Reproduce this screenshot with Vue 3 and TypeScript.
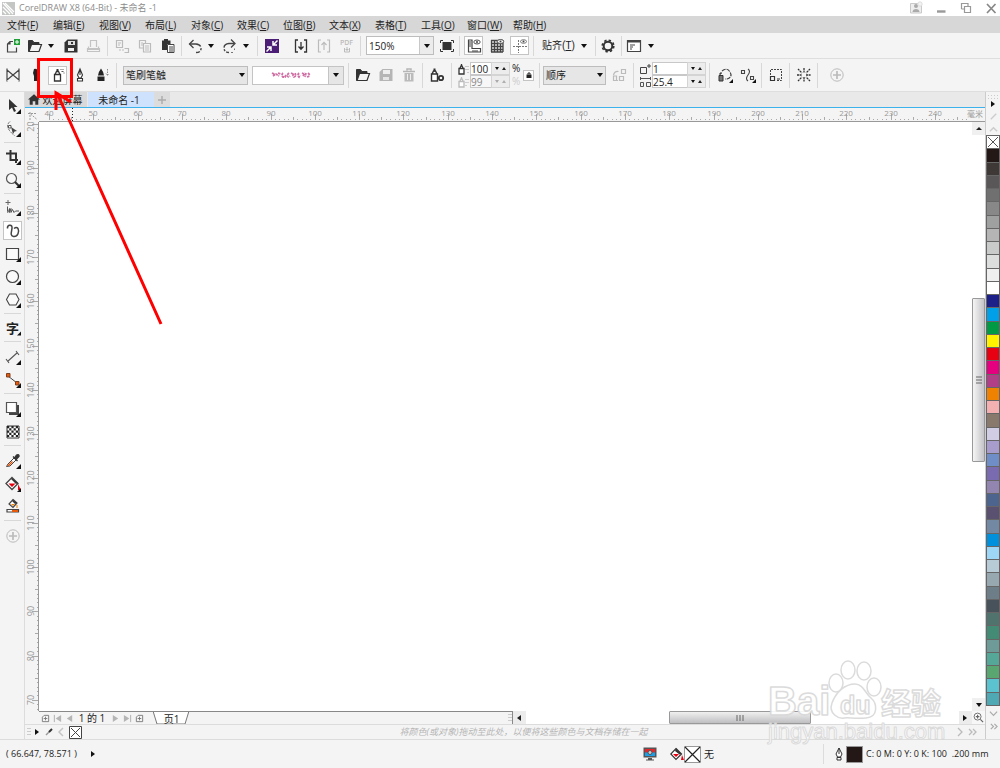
<script setup lang="ts">
import { ref } from 'vue'

interface Tick { pos: number; size: number }
interface Mark { pos: number; label: string }

const MM = 4.43

const menus: [string, string][] = [
  ['文件', 'F'], ['编辑', 'E'], ['视图', 'V'], ['布局', 'L'], ['对象', 'C'], ['效果', 'C'],
  ['位图', 'B'], ['文本', 'X'], ['表格', 'T'], ['工具', 'O'], ['窗口', 'W'], ['帮助', 'H'],
]

const swatches: string[] = [
  '#231815', '#3e3836', '#595757', '#717071', '#888888', '#9fa0a0', '#b5b5b6', '#c9caca', '#dcdddd',
  '#efefef', '#ffffff', '#1d2088', '#00a0e9', '#009944', '#fff100', '#e60012', '#e4007f', '#b03f87',
  '#ef8200', '#f4b0b1', '#89786c', '#d0cde4', '#a79ccc', '#6f8ec8', '#7a6ab0', '#9285b0', '#4d648f',
  '#5a5070', '#7388a3', '#0090dc', '#9dd7f5', '#b7cbd7', '#98a8b0', '#6e7e88', '#48525a', '#50746d',
  '#438b75', '#6e9a98', '#55a898', '#5aa671', '#5bc2d0', '#4fa9b5',
]

function ticks(origin: number, count: number): Tick[] {
  return Array.from({ length: count }, (_, i) => ({
    pos: Math.round(origin + i * MM),
    size: i % 10 === 0 ? 6 : i % 5 === 0 ? 3 : 1,
  }))
}
function marks(origin: number, start: number, step: number, count: number): Mark[] {
  return Array.from({ length: count }, (_, i) => ({
    pos: Math.round(origin + i * 10 * MM),
    label: String(start + i * step),
  }))
}

const hTicks = ticks(10, 420)
const hMarks = marks(10, 40, 10, 21)
const vTicks = ticks(2, 134)
const vMarks = marks(2, 200, -10, 14)

const zoomLevel = ref('150%')
const brushKind = ref('笔刷笔触')
const order = ref('顺序')
const sprayW = ref('100')
const sprayH = ref('99')
const dabs = ref('1')
const spacing = ref('25.4')
</script>

<template>
  <div class="app">
    <header class="title">
      <svg class="logo" viewBox="0 0 13 13"><rect width="13" height="13" fill="#c4c6c4" /><path d="M1 1L11 12M3 1l9 9M1 5l7 7M1 9l3 3" stroke="#fff" stroke-width="1.2" /></svg>
      <h1>CorelDRAW X8 (64-Bit) - 未命名 -1</h1>
      <div class="win">
        <button aria-label="账户"><svg viewBox="0 0 14 14"><path d="M1.500 2.500h11v9.500h-11z" fill="#eee" stroke="#c9c9c9" /><circle cx="7" cy="5" r="2" fill="#aaa" /><path d="M3.500 11c0-4 7-4 7 0z" fill="#aaa" /><circle cx="11" cy="3" r="2.200" fill="#f3f3f3" stroke="#ddd" /></svg></button>
        <button aria-label="最小化"><svg viewBox="0 0 14 14"><path d="M3 10.500h8.500" stroke="#999" stroke-width="2.400" /></svg></button>
        <button aria-label="还原"><svg viewBox="0 0 14 14"><path d="M2.500 8V2.500h6.500V5M5.500 5.500h6v6h-6zM2.500 8H5" fill="none" stroke="#999" stroke-width="1.200" /></svg></button>
        <button aria-label="关闭"><svg viewBox="0 0 14 14"><path d="M3 3l8.500 9M11.500 3L3 12" stroke="#888" stroke-width="1.700" /></svg></button>
      </div>
    </header>

    <nav class="menu">
      <button v-for="m in menus" :key="m[0]">{{ m[0] }}(<u>{{ m[1] }}</u>)</button>
    </nav>

    <div class="bar std">
      <button class="tb" aria-label="新建"><svg viewBox="0 0 16 16"><path d="M8 3.500H5L2.500 6v8h9V9.500M5 3.500V6H2.500" fill="none" stroke="#444" stroke-width="1.200" /><rect x="9" y="1" width="6" height="6" fill="#21a03a" /><path d="M12 2v4M10 4h4" stroke="#fff" /></svg></button>
      <div class="split">
        <button aria-label="打开"><svg viewBox="0 0 16 16"><path d="M1.500 13.500v-11h4l1.500 2h5V6" fill="#333" stroke="#333" /><path d="M2 13.500L4.500 6.500h10l-2.500 7z" fill="#f4f4f4" stroke="#333" stroke-width="1.200" /></svg></button>
        <button class="dd" aria-label="最近文件"><i /></button>
      </div>
      <button class="tb" aria-label="保存"><svg viewBox="0 0 16 16"><path d="M4.500 1.500h10v13h-13v-10z" fill="#333" /><rect x="5" y="3" width="7" height="4" fill="#ddd" /><rect x="5" y="10" width="6" height="3" fill="#eee" /><rect x="8" y="4" width="2" height="2" fill="#333" /></svg></button>
      <button class="tb" aria-label="打印"><svg viewBox="0 0 16 16"><path d="M4.500 9V2.500h6V9M2.500 8.500v3h10v-3M1.500 10.500v3h12v-3z" fill="none" stroke="#c3c3c3" stroke-width="1.200" /></svg></button>
      <span class="sep" />
      <button class="tb" aria-label="剪切"><svg viewBox="0 0 16 16"><path d="M2.500 2.500h6v7h-6zM4 5h3M4 7h2M10.500 10.500h4v4h-4M5 12h2m1 0h2" fill="none" stroke="#bbb" stroke-width="1.200" /></svg></button>
      <button class="tb" aria-label="复制"><svg viewBox="0 0 16 16"><path d="M6 10H2.500V2.500h6V5M4 5h2M4 7h2M6.500 5.500h7v8.500h-7zM8 8h4M8 10h4M8 12h4" fill="none" stroke="#bbb" stroke-width="1.200" /></svg></button>
      <button class="tb" aria-label="粘贴"><svg viewBox="0 0 16 16"><path d="M2 2.500h2V1h4v1.500h2.500V6H7v6H2z" fill="#333" /><path d="M7.500 6.500h6.500v8H7.500zM9 9h4M9 11h4M9 13h4" fill="#fff" stroke="#444" /></svg></button>
      <span class="sep" />
      <div class="split">
        <button aria-label="撤销"><svg viewBox="0 0 16 16"><path d="M2.500 6h6.500q5 .5 5 4.500t-5 4" fill="none" stroke="#444" stroke-width="1.400" stroke-dasharray="12 1.500 2 1.500" /><path d="M6.500 2L2.500 6l4 4" fill="none" stroke="#444" stroke-width="1.300" /></svg></button>
        <button class="dd" aria-label="撤销列表"><i /></button>
      </div>
      <div class="split">
        <button aria-label="重做"><svg viewBox="0 0 16 16"><path d="M12 5.500H7Q2 6 2 10t5 4.500" fill="none" stroke="#444" stroke-width="1.400" stroke-dasharray="12 1.500 2 1.500" /><path d="M9 1.500l4 4-4 4" fill="none" stroke="#444" stroke-width="1.300" /><path d="M9 14.500h2M12.500 12v-1.500" stroke="#777" /></svg></button>
        <button class="dd" aria-label="重做列表"><i /></button>
      </div>
      <span class="sep wide" />
      <button class="tb purple" aria-label="搜索内容"><svg viewBox="0 0 16 16"><rect x="1" y="1" width="14" height="14" fill="#4b1d75" /><path d="M13.500 2.500L9.500 6.500M9 3v4h4M2.500 13.500l4-4M3 9h4v4" fill="none" stroke="#fff" stroke-width="1.500" /></svg></button>
      <span class="sep wide blank" />
      <button class="tb" aria-label="导入"><svg viewBox="0 0 16 16"><path d="M5 2H2.500v12H5M11 2h2.500v12H11M8 4v7M5.500 8.500L8 11.200l2.500-2.700" fill="none" stroke="#333" stroke-width="1.300" /></svg></button>
      <button class="tb" aria-label="导出"><svg viewBox="0 0 16 16"><path d="M5 2H2.500v12H5M11 2h2.500v12H11M8 12V4.500M5.500 7L8 4.300 10.500 7" fill="none" stroke="#bbb" stroke-width="1.200" /></svg></button>
      <button class="tb pdf" aria-label="发布为 PDF">PDF<svg viewBox="0 0 8 6"><path d="M1.500 1v4h5V1M4 0v4M2.500 2.500h3" fill="none" stroke="#bbb" /></svg></button>
      <span class="sep" />
      <label class="combo zoom"><input v-model="zoomLevel" aria-label="缩放级别"><button class="dd" aria-label="缩放列表"><i /></button></label>
      <button class="tb narrow" aria-label="全屏预览"><svg viewBox="0 0 16 16"><rect x="3.500" y="4" width="9" height="8" fill="#333" /><path d="M1.500 5V2.500H4M12 2.500h2.500V5M14.500 11v2.500H12M4 13.500H1.500V11" fill="none" stroke="#333" /></svg></button>
      <span class="sep" />
      <button class="tb on" aria-label="显示标尺"><svg viewBox="0 0 16 16"><path d="M2.500 2v12h12v-3.500H6V2z" fill="#fff" stroke="#444" stroke-width="1.200" /><path d="M3 4h2M3 6h2M3 8h2M7 12v2M9 12v2M11 12v2" stroke="#444" /><ellipse cx="11" cy="4" rx="3.200" ry="2" fill="#fff" stroke="#555" /><circle cx="11" cy="4" r="1" fill="#444" /></svg></button>
      <button class="tb" aria-label="显示网格"><svg viewBox="0 0 16 16"><path d="M2 2.500h12M2 5.500h12M2 8.500h12M2 11.500h12M2 14h12M2.500 2v12M5.500 2v12M8.500 2v12M11.500 2v12M14 2v12" stroke="#444" stroke-width="1.300" /><ellipse cx="11.500" cy="3.500" rx="3.200" ry="2" fill="#fff" stroke="#555" /><circle cx="11.500" cy="3.500" r="1" fill="#444" /></svg></button>
      <button class="tb on" aria-label="显示辅助线"><svg viewBox="0 0 16 16"><path d="M6.500 2v13M1 8.500h14" stroke="#777" stroke-dasharray="2 1" /><ellipse cx="11.500" cy="3.500" rx="3" ry="1.800" fill="#fff" stroke="#777" /><circle cx="11.500" cy="3.500" r="1" fill="#444" /></svg></button>
      <span class="sep" />
      <button class="snap"><span>贴齐(<u>T</u>)</span><i /></button>
      <span class="sep" />
      <button class="tb narrow" aria-label="选项"><svg viewBox="0 0 16 16"><circle cx="8" cy="8" r="4.300" fill="none" stroke="#333" stroke-width="2" /><circle cx="8" cy="8" r="5.800" fill="none" stroke="#333" stroke-width="1.600" stroke-dasharray="2.400 2.150" /></svg></button>
      <span class="sep" />
      <div class="split">
        <button aria-label="应用程序启动器"><svg viewBox="0 0 16 16"><path d="M1.500 2.500h13v11h-13z" fill="#fff" stroke="#444" stroke-width="1.200" /><path d="M2 3.500h12" stroke="#444" stroke-width="2" /><path d="M4 7h5M4 9h3M4 11h2" stroke="#444" /></svg></button>
        <button class="dd" aria-label="启动列表"><i /></button>
      </div>
    </div>

    <div class="bar props">
      <button class="tb" aria-label="预设"><svg viewBox="0 0 16 16"><path d="M2 3l6 5-6 5zM14 3L8 8l6 5zM2 1.500v2M2 12.500v2M14 1.500v2M14 12.500v2" fill="none" stroke="#444" stroke-width="1.200" /></svg></button>
      <button class="tb" aria-label="笔刷"><svg viewBox="0 0 16 16"><path d="M6 2q3-1 4 2l-1 4v6H6V9L5 6z" fill="#222" /></svg></button>
      <button class="tb on spray" aria-label="喷涂" aria-pressed="true"><svg viewBox="0 0 16 16"><path d="M4.500 7.500h6v6.500h-6zM5 7.500l1.500-3h2l1.500 3" fill="#fff" stroke="#333" stroke-width="1.300" /><rect x="6.500" y="2" width="2" height="3" fill="#333" /><path d="M10.500 2.500h1m1 0h1M11.500 4.500h2M13.500 6h1" stroke="#555" /></svg></button>
      <button class="tb" aria-label="书法"><svg viewBox="0 0 16 16"><path d="M8 2L5.500 8 7 11h2l1.500-3zM8 2v6M5.500 14v-2.500h5V14z" fill="#fff" stroke="#333" stroke-width="1.100" /></svg></button>
      <button class="tb" aria-label="压力"><svg viewBox="0 0 16 16"><path d="M6 1.500q3 4 3 7H3q0-3 3-7zM2.500 9.500h7V14h-7z" fill="#222" /><path d="M12.500 2v6M11 6.500l1.500 2L14 6.500" fill="none" stroke="#888" stroke-dasharray="1.500 1" /></svg></button>
      <span class="sep" />
      <label class="sel brush"><select v-model="brushKind" aria-label="类别"><option>笔刷笔触</option></select><i /></label>
      <button class="sample" aria-label="喷射图样">
        <span><svg viewBox="0 0 40 8"><g fill="none" stroke="#cf6fa4" stroke-width="1.800"><path d="M1 2l3 1.500M2 5l3-2 3 2M7 2l3 1M12 2q-2 2 0 4h2l1-2M18 2l-2 2q1 3 3 1M20 2l2 1M23 3q-2 1 0 3l2-1-1-3M28 2q-2 2 0 4l1-2M31 2l2 1M32 5l2-3M35 2l-1 4M37 2l2 2M36 6l3-1" stroke-dasharray="2.500 .7" /></g></svg></span>
        <b><i /></b>
      </button>
      <span class="sep" />
      <button class="tb" aria-label="浏览"><svg viewBox="0 0 16 16"><path d="M1.500 13.500v-11h4l1.500 2h5V6" fill="#333" stroke="#333" /><path d="M2 13.500L4.500 6.500h10l-2.500 7z" fill="#f4f4f4" stroke="#333" stroke-width="1.200" /></svg></button>
      <button class="tb" aria-label="保存笔触"><svg viewBox="0 0 16 16"><path d="M4.500 2h10v12h-13V5z" fill="#b5b5b5" /><rect x="5" y="3" width="7" height="4" fill="#eee" /><rect x="5" y="10" width="6" height="3" fill="#e5e5e5" /></svg></button>
      <button class="tb" aria-label="删除"><svg viewBox="0 0 16 16"><path d="M2 4.500h12M6 3.500V2h4v1.500" fill="none" stroke="#b5b5b5" stroke-width="1.500" /><path d="M3.500 6h9v8.500h-9z" fill="#bbb" /><path d="M6.500 7v6M9.500 7v6" stroke="#eee" /></svg></button>
      <span class="sep" />
      <button class="tb" aria-label="喷涂列表选项"><svg viewBox="0 0 16 16"><path d="M2.500 7h6v7h-6zM3 7l1.500-3h2L8 7" fill="#fff" stroke="#333" stroke-width="1.400" /><rect x="4.500" y="1.500" width="2" height="3" fill="#333" /><circle cx="12" cy="11" r="2.200" fill="none" stroke="#333" stroke-width="1.800" /></svg></button>
      <span class="sep wide" />
      <div class="pair">
        <label><svg viewBox="0 0 12 12"><path d="M2 5.500h5V11H2zM3 5L4 3h1l1 2M4.500 1v2" fill="#fff" stroke="#333" stroke-width="1.300" /><path d="M9 3v1M9 6v1M11 3v1M11 6v1M11 9v1" stroke="#999" /></svg><input v-model="sprayW" aria-label="喷涂宽度"><span class="spin"><i /><i class="up" /></span></label>
        <label class="off"><svg viewBox="0 0 12 12"><path d="M2 5.500h5V11H2zM3 5L4 3h1l1 2M4.500 1v2" fill="#fff" stroke="#bbb" stroke-width="1.300" /><path d="M9 3v1M9 6v1M11 3v1M11 6v1M9 9v1" stroke="#aaa" /></svg><input v-model="sprayH" aria-label="喷涂高度" disabled><span class="spin"><i /><i class="up" /></span></label>
      </div>
      <div class="pct"><span>%</span><span class="dim">%</span></div>
      <button class="lock" aria-label="锁定比例"><svg viewBox="0 0 10 10"><path d="M2.500 4.500h5V8h-5z" fill="#222" /><path d="M4 4.500V3h2v1.500" fill="none" stroke="#222" /></svg></button>
      <span class="sep wide" />
      <label class="sel order"><select v-model="order" aria-label="喷涂顺序"><option>顺序</option></select><i /></label>
      <button class="tb" aria-label="添加到喷涂列表"><svg viewBox="0 0 16 16"><path d="M10.500 2.500h4v4h-4zM8.500 9.500h4v4h-4zM2.500 9h3v4.500h-3zM2.500 8q1-4 5-3.500M4 13.500h3" fill="none" stroke="#bbb" stroke-width="1.200" /></svg></button>
      <span class="sep wide" />
      <div class="pair long">
        <label><svg viewBox="0 0 12 12"><path d="M1.500 4.500h6v6h-6z" fill="none" stroke="#444" /><path d="M10 1v4M8 3h4" stroke="#444" /></svg><input v-model="dabs" aria-label="每个色块中的图像数"><span class="spin"><i /><i class="up" /></span></label>
        <label><svg viewBox="0 0 12 12"><path d="M1.500 2.500h10M1.500 1v3M11.500 1v3M1.500 6.500h3v4h-3zM7.500 6.500h4v4h-4z" fill="none" stroke="#555" /></svg><input v-model="spacing" aria-label="图像间距"><span class="spin"><i /><i class="up" /></span></label>
      </div>
      <span class="sep wide" />
      <button class="tb" aria-label="旋转"><svg viewBox="0 0 16 16"><path d="M2 8.500h4V14H2zM3 8V6h2" fill="#777" stroke="#333" /><path d="M5 4q5-4 8 1t-3 7H8" fill="none" stroke="#444" stroke-dasharray="4 1" stroke-width="1.200" /><path d="M16 12v4h-4z" fill="#111" /></svg></button>
      <button class="tb" aria-label="偏移"><svg viewBox="0 0 16 16"><path d="M1.500 3.500h3v3h-3zM10.500 9.500h3v3h-3zM8 2q3 2 0 6t0 6" fill="none" stroke="#444" stroke-width="1.100" /><path d="M16 12v4h-4z" fill="#111" /></svg></button>
      <span class="sep" />
      <button class="tb" aria-label="随对象缩放"><svg viewBox="0 0 16 16"><path d="M2.500 8V2.500h11v11H8" fill="none" stroke="#444" stroke-dasharray="2 1" /><path d="M2.500 9.500h4v4h-4zM9 12h3" fill="none" stroke="#333" stroke-width="1.200" /></svg></button>
      <span class="sep" />
      <button class="tb" aria-label="重置值"><svg viewBox="0 0 16 16"><path d="M8 1v5M8 10v5M1 8h5M10 8h5M2 2l4 4M14 2l-4 4M2 14l4-4M14 14l-4-4" stroke="#333" stroke-width="1.300" stroke-dasharray="2 .6" /></svg></button>
      <span class="sep" />
      <button class="tb last" aria-label="快速自定义"><svg viewBox="0 0 16 16"><circle cx="8" cy="8" r="6.200" fill="none" stroke="#bbb" /><path d="M8 4v8M4 8h8" stroke="#bbb" stroke-width="1.700" /></svg></button>
    </div>

    <main class="work">
      <aside class="tools">
        <button aria-label="选择"><svg viewBox="0 0 18 18"><path d="M5 2v11l3-2.500 2 4.500 2-1-2-4h3.500z" fill="#333" /><path d="M17 12v5h-5z" fill="#111" /></svg></button>
        <button aria-label="形状"><svg viewBox="0 0 18 18"><path d="M6 1.500Q2 5 4.500 9t6 6.500" fill="none" stroke="#777" stroke-dasharray="3 1" /><path d="M7 7l6 4-2.500.5L9 14z" fill="#444" /><path d="M4.500 5.500h2.500V8H4.500z" fill="#fff" stroke="#555" /><path d="M17 12v5h-5z" fill="#111" /></svg></button>
        <hr>
        <button aria-label="裁剪"><svg viewBox="0 0 18 18"><path d="M6.500 2v10H14M2 5.500h10V15" fill="none" stroke="#333" stroke-width="2" /><path d="M17 12v5h-5z" fill="#111" /></svg></button>
        <button aria-label="缩放"><svg viewBox="0 0 18 18"><circle cx="7.500" cy="7.500" r="5" fill="#f8f8f8" stroke="#555" stroke-width="1.200" /><path d="M11 11l4 4" stroke="#333" stroke-width="2.200" /><path d="M17 12v5h-5z" fill="#111" /></svg></button>
        <hr>
        <button aria-label="手绘"><svg viewBox="0 0 18 18"><path d="M4 1v5M1.500 3.500h5" stroke="#666" /><path d="M3.500 7.500v5q0 2 1 0l1-3v4l1.500-4v4l1.500-3 1.500 3 1.500-1.500H15" fill="none" stroke="#555" /><path d="M17 12v5h-5z" fill="#111" /></svg></button>
        <button class="on" aria-label="艺术笔" aria-pressed="true"><svg viewBox="0 0 18 18"><path d="M3.500 6.500C3 3 7.500 2 8 5S5 14 9.500 14.500s6-5 4.500-8q-1.500-2-4 0" fill="none" stroke="#444" stroke-width="1.500" /></svg></button>
        <button aria-label="矩形"><svg viewBox="0 0 18 18"><path d="M2.500 3.500h12v11h-12z" fill="#fafafa" stroke="#444" stroke-width="1.200" /><path d="M17 12v5h-5z" fill="#111" /></svg></button>
        <button aria-label="椭圆形"><svg viewBox="0 0 18 18"><circle cx="8.500" cy="8.500" r="6" fill="#fafafa" stroke="#444" stroke-width="1.200" /><path d="M17 12v5h-5z" fill="#111" /></svg></button>
        <button aria-label="多边形"><svg viewBox="0 0 18 18"><path d="M5.500 3h6.500l3 5.500-3 5.500H5.500l-3-5.500z" fill="#fafafa" stroke="#444" stroke-width="1.100" /><path d="M17 12v5h-5z" fill="#111" /></svg></button>
        <hr>
        <button class="glyph" aria-label="文本">字<svg viewBox="0 0 5 5"><path d="M5 0v5H0z" fill="#111" /></svg></button>
        <hr class="lo">
        <button aria-label="平行度量"><svg viewBox="0 0 18 18"><path d="M3.500 13.500l10-9M2 11l3 4M12 3l3 4" fill="none" stroke="#555" stroke-width="1.100" /><path d="M17 12v5h-5z" fill="#111" /></svg></button>
        <button aria-label="直线连接器"><svg viewBox="0 0 18 18"><path d="M4 5l9 7" stroke="#444" /><path d="M2.500 2.500h3.500V6H2.500zM11.500 10.500H15V14h-3.500z" fill="#e8590c" stroke="#7a4020" /><path d="M17 12v5h-5z" fill="#111" /></svg></button>
        <hr class="lo">
        <button aria-label="阴影"><svg viewBox="0 0 18 18"><path d="M5 5h10v10H5z" fill="#444" /><path d="M2.500 2.500h10v10h-10z" fill="#fff" stroke="#555" stroke-width="1.200" /><path d="M17 12v5h-5z" fill="#111" /></svg></button>
        <button aria-label="透明度"><svg viewBox="0 0 18 18"><path d="M3 3h12v12H3z" fill="#fff" stroke="#333" /><path d="M3 4.200h12M3 8.600h12M3 13h12" stroke="#222" stroke-width="2.200" stroke-dasharray="2.200 2.200" /><path d="M5.200 6.400h10M5.200 10.800h10" stroke="#222" stroke-width="2.200" stroke-dasharray="2.200 2.200" /></svg></button>
        <hr class="lo">
        <button aria-label="颜色滴管"><svg viewBox="0 0 18 18"><path d="M2.500 14.500L4 12l6-6 2 2-6 6z" fill="#fff" stroke="#444" /><path d="M3 14l5-5 1 1-4 4z" fill="#e8590c" /><path d="M9 4.500l4.500 4.500M10.500 6l2-3q3-1 2.500 1.500L12 7.500z" fill="#333" stroke="#333" stroke-width="1.300" /><path d="M17 12v5h-5z" fill="#111" /></svg></button>
        <button aria-label="交互式填充"><svg viewBox="0 0 18 18"><path d="M8 2.500l6 6-6 6-6-6z" fill="#fff" stroke="#444" stroke-width="1.300" /><path d="M8 3l6 5-2 1-5-5z" fill="#333" /><path d="M4.500 8.500h7L8 12zM14 9l3 6h-3z" fill="#e60012" /><path d="M17 13v4h-4z" fill="#111" /></svg></button>
        <button aria-label="智能填充"><svg viewBox="0 0 18 18"><path d="M9 1.500L13 5l-4 4.500L5 6z" fill="#fff" stroke="#444" stroke-width="1.200" /><path d="M9 2l4 3-2 1-3-3z" fill="#333" /><path d="M7 6h4L9 8z" fill="#ef8200" /><path d="M13 7v3" stroke="#ef8200" /><path d="M3 11.500h11.500V14H3z" fill="#fff" stroke="#444" stroke-width="1.200" /><path d="M8 12h6v2H8z" fill="#e8590c" /></svg></button>
        <hr class="lo">
        <button aria-label="自定义工具箱"><svg viewBox="0 0 18 18"><circle cx="9" cy="9" r="6.200" fill="none" stroke="#bbb" /><path d="M9 5v8M5 9h8" stroke="#bbb" stroke-width="1.700" /></svg></button>
      </aside>

      <section class="doc">
        <div class="tabs">
          <button class="home"><svg viewBox="0 0 14 12"><path d="M7 0l7 6h-2v6H8.500V8h-3v4H2V6H0z" fill="#333" /></svg>欢迎屏幕</button>
          <button class="cur">未命名 -1</button>
          <button class="add" aria-label="新文档"><svg viewBox="0 0 10 10"><path d="M5 1v8M1 5h8" stroke="#aaa" stroke-width="1.400" /></svg></button>
        </div>
        <div class="ruler-row">
          <svg class="origin" viewBox="0 0 14 14"><path d="M5 4v8M3 5.500h9M5.500 6l6 5" fill="none" stroke="#999" stroke-dasharray="2 1" /></svg>
          <svg class="hr">
            <rect v-for="(t, i) in hTicks" :key="i" :x="t.pos" :y="12 - t.size" width="1" :height="t.size" fill="#aaa" />
            <text v-for="m in hMarks" :key="m.label" :x="m.pos" y="8" text-anchor="middle">{{ m.label }}</text>
            <path d="M33.500 0v14" stroke="#222" stroke-dasharray="1 2" />
          </svg>
          <span class="unit">毫米</span>
        </div>
        <div class="canvas-row">
          <svg class="vr">
            <rect v-for="(t, i) in vTicks" :key="i" :x="13 - t.size" :y="t.pos" :width="t.size" height="1" fill="#aaa" />
            <text v-for="m in vMarks" :key="m.label" :transform="`translate(9 ${m.pos}) rotate(-90)`" text-anchor="middle">{{ m.label }}</text>
          </svg>
          <div class="sheet" />
          <div class="vscroll">
            <button aria-label="向上滚动"><i class="up" /></button>
            <span class="before" />
            <span class="thumb"><svg viewBox="0 0 6 8"><path d="M0 1h6M0 4h6M0 7h6" stroke="#666" /></svg></span>
            <span class="after" />
            <button aria-label="向下滚动"><i /></button>
          </div>
        </div>
        <div class="page-row">
          <div class="pages">
            <button aria-label="添加页面"><svg viewBox="0 0 10 10"><path d="M3.500 1.500h5v7h-7v-5zM5 3v4M3 5h4" fill="none" stroke="#777" /></svg></button>
            <button aria-label="第一页"><svg viewBox="0 0 10 10"><path d="M1.500 1v8" stroke="#aaa" /><path d="M9 1v8L3 5z" fill="#b5b5b5" /></svg></button>
            <button aria-label="上一页"><svg viewBox="0 0 10 10"><path d="M8 1v8L2 5z" fill="#b5b5b5" /></svg></button>
            <span class="count">1 的 1</span>
            <button aria-label="下一页"><svg viewBox="0 0 10 10"><path d="M2 1v8l6-4z" fill="#b5b5b5" /></svg></button>
            <button aria-label="最后一页"><svg viewBox="0 0 10 10"><path d="M8.500 1v8" stroke="#aaa" /><path d="M1 1v8l6-4z" fill="#b5b5b5" /></svg></button>
            <button aria-label="添加页面到末尾"><svg viewBox="0 0 10 10"><path d="M3.500 1.500h5v7h-7v-5zM5 3v4M3 5h4" fill="none" stroke="#777" /></svg></button>
            <button class="page"><svg viewBox="0 0 37 13"><path d="M0 -1l4 13h28l4-13" fill="#fff" stroke="#777" /></svg><span>页1</span></button>
            <span class="grip" />
          </div>
          <div class="hscroll">
            <button aria-label="向左滚动"><i class="left" /></button>
            <span class="before" />
            <span class="thumb"><svg viewBox="0 0 8 6"><path d="M1 0v6M4 0v6M7 0v6" stroke="#666" /></svg></span>
            <span class="after" />
            <button aria-label="向右滚动"><i class="right" /></button>
            <button class="nav" aria-label="导航器"><svg viewBox="0 0 12 12"><circle cx="5" cy="5" r="3.800" fill="#fff" stroke="#666" /><path d="M5 3v4M3 5h4M8 8l3 3" stroke="#666" stroke-width="1.300" /></svg></button>
          </div>
        </div>
        <div class="docpal">
          <span class="grip" /><i class="right" />
          <button aria-label="取色"><svg viewBox="0 0 10 10"><path d="M2 8l3.500-3.500" stroke="#999" stroke-width="1.500" /><path d="M5 5l3-3" stroke="#333" stroke-width="2" /></svg></button>
          <button aria-label="向左"><svg viewBox="0 0 10 10"><path d="M7 1L3 5l4 4" fill="none" stroke="#c5c5c5" stroke-width="1.500" /></svg></button>
          <button class="none" aria-label="无颜色"><svg viewBox="0 0 13 13"><path d="M.5.5h12v12H.5zM2 2l9 9M11 2l-9 9" fill="#fff" stroke="#444" /></svg></button>
          <em>将颜色(或对象)拖动至此处，以便将这些颜色与文档存储在一起</em>
          <button aria-label="向右"><svg viewBox="0 0 10 10"><path d="M3 1l4 4-4 4" fill="none" stroke="#bbb" stroke-width="1.300" /></svg></button>
          <button aria-label="展开"><svg viewBox="0 0 10 10"><path d="M2 2l3 3-3 3M6 2l3 3-3 3" fill="none" stroke="#bbb" stroke-width="1.300" /></svg></button>
        </div>
      </section>

      <aside class="palette">
        <span class="dots" />
        <i class="right" />
        <svg class="sm" viewBox="0 0 10 10"><path d="M2 8l6-6" stroke="#ccc" stroke-width="1.500" /></svg>
        <svg class="sm" viewBox="0 0 10 10"><path d="M1 7l4-4 4 4" fill="none" stroke="#ccc" stroke-width="1.600" /></svg>
        <div class="chips">
          <button aria-label="无填充"><svg viewBox="0 0 12 12"><path d="M1 1l10 10M11 1L1 11" stroke="#555" /></svg></button>
          <button v-for="c in swatches" :key="c" :style="{ background: c }" :aria-label="c" />
        </div>
        <svg class="sm" viewBox="0 0 10 10"><path d="M1 3l4 4 4-4" fill="none" stroke="#aaa" stroke-width="1.300" /></svg>
        <svg class="sm" viewBox="0 0 10 10"><path d="M2 2l3 3-3 3M6 2l3 3-3 3" fill="none" stroke="#aaa" stroke-width="1.300" /></svg>
      </aside>
    </main>

    <footer class="status">
      <span class="xy">( 66.647, 78.571 )</span><i class="right" />
      <div class="fills">
        <svg class="mon" viewBox="0 0 14 14"><rect x=".5" y=".5" width="13" height="10" fill="#555" /><path d="M2 2h10v3.500H2z" fill="#e8232a" /><path d="M2 5.500h10V9H2z" fill="#19a0e8" /><circle cx="7" cy="5.500" r="2" fill="#ccc" stroke="#555" /><path d="M5 11h4v1.500h2v1H3v-1h2z" fill="#555" /></svg>
        <svg class="pot" viewBox="0 0 14 14"><path d="M6 1.500L11.500 7 6 12.500.8 7z" fill="#fff" stroke="#333" stroke-width="1.200" /><path d="M6 1.500L11.500 7l-2 .5L5 4z" fill="#333" /><path d="M3 7h6L6 10zM12 8l2 5h-3z" fill="#e60012" /></svg>
        <svg class="box" viewBox="0 0 17 17"><path d="M.5.5h16v16H.5z" fill="#fff" stroke="#999" /><path d="M1 1l15 15M16 1L1 16" stroke="#222" stroke-width="1.200" /></svg>
        <span class="nofill">无</span>
      </div>
      <div class="outline">
        <svg class="pen" viewBox="0 0 8 14"><path d="M4 1L1 7l1.500 3h3L7 7zM4 1v6M2 10.500h4V13H2z" fill="#fff" stroke="#333" /></svg>
        <b class="ink" />
        <span>C: 0 M: 0 Y: 0 K: 100&nbsp; .200 mm</span>
      </div>
    </footer>

    <svg class="note" viewBox="0 0 130 270" aria-hidden="true">
      <path d="M4.500 1.500h33v37h-33z" fill="none" stroke="#f00" stroke-width="3" />
      <path d="M23 35l104 231M22 52V35l15 9" fill="none" stroke="#f00" stroke-width="3" />
    </svg>

    <svg class="mark" viewBox="0 0 190 90" aria-hidden="true">
      <g fill="#fff" stroke="#d8d8d8" stroke-width="1.500" stroke-linejoin="round" opacity=".9">
        <text class="url" x="3" y="84">jingyan.baidu.com</text>
        <text class="big" x="3" y="60">Bai</text>
        <ellipse cx="71" cy="28" rx="7" ry="9" /><ellipse cx="83" cy="15" rx="7" ry="9" />
        <ellipse cx="99" cy="16" rx="7" ry="9" /><ellipse cx="109" cy="32" rx="7" ry="9" />
        <path d="M90 29c8 0 10 9 16 14s8 19-5 20-17-1-22 0-16-4-12-15 13-19 23-19z" />
        <text class="du" x="75" y="59">du</text>
        <text class="jy" x="116" y="59">经验</text>
      </g>
    </svg>
  </div>
</template>

<style>
body { margin: 0; background: #f3f3f3; }
</style>

<style scoped>
* { box-sizing: border-box; }
.app { position: relative; display: flex; flex-direction: column; min-height: 100vh; background: #f4f4f4; color: #222; font: 10px/14px "Open Sans", "Noto Sans CJK SC", sans-serif; overflow: hidden; }
button { display: flex; align-items: center; justify-content: center; margin: 0; padding: 0; border: 0; background: none; color: inherit; font: inherit; white-space: nowrap; flex: none; }
input, select { margin: 0; padding: 0 2px; border: 0; min-width: 0; background: none; color: inherit; font: inherit; appearance: none; outline: none; }
svg { display: block; flex: none; }
i { flex: none; width: 0; height: 0; border: 3px solid transparent; border-top: 4px solid #111; border-bottom: 0; }
i.up { border-top: 0; border-bottom: 3px solid #222; }
i.left { border: 3px solid transparent; border-left: 0; border-right: 4px solid #222; }
i.right { border: 3px solid transparent; border-right: 0; border-left: 4px solid #111; }

.title { display: flex; align-items: center; height: 16px; padding: 0 2px; background: #fff; color: #8c8c8c; }
.logo { width: 13px; height: 13px; }
.title h1 { margin: 0 auto 0 4px; font-size: 9px; font-weight: 400; }
.win { display: flex; gap: 11px; }
.win svg { width: 14px; height: 14px; }

.menu { display: flex; height: 17px; padding-left: 7px; background: #d7d7d7; }
.menu button { width: 46px; justify-content: flex-start; }

.bar { display: flex; align-items: center; padding-left: 1px; border-bottom: 1px solid #dedede; }
.std { height: 26px; }
.props { height: 33px; }
.tb { width: 23px; height: 20px; }
.tb svg, .split svg { width: 16px; height: 16px; }
.tb.on { width: 19px; height: 19px; margin: 0 2px; border: 1px solid #c4c4c4; background: #fff; }
.tb.narrow { width: 21px; }
.tb.last { margin-left: 5px; }
.tb.on.spray { margin: 0 1px; }
.tb.purple { width: 21px; }
.split { display: flex; width: 35px; }
.split button { width: 21px; }
.split .dd { width: 12px; }
.sep { flex: none; width: 1px; height: 20px; margin: 0 2px; background: #d8d8d8; }
.props .sep { height: 25px; }
.sep.wide { margin: 0 3px; }
.sep.blank { background: none; }
.pdf { flex-direction: column; color: #bbb; font-size: 7px; line-height: 8px; font-weight: 600; }
.tb.pdf svg { width: 8px; height: 6px; }
.combo { display: flex; height: 19px; border: 1px solid #bdbdbd; background: #fff; }
.combo.zoom { width: 68px; margin: 0 2px 0 3px; }
.combo input { flex: 1; width: 40px; }
.combo .dd { width: 14px; background: #ececec; border-left: 1px solid #c8c8c8; }
.snap { gap: 6px; padding: 0 6px; font-family: Roboto, "Noto Sans CJK SC", sans-serif; }

.sel { display: grid; align-items: center; height: 19px; border: 1px solid #bdbdbd; background: #e6e6e6; }
.sel select { grid-area: 1 / 1; width: 100%; height: 17px; }
.sel i { grid-area: 1 / 1; justify-self: end; margin-right: 2px; pointer-events: none; }
.sel.brush { width: 125px; margin: 0 4px; }
.sel.order { width: 63px; margin: 0 1px 0 0; }
.sample { width: 92px; height: 19px; border: 1px solid #c4c4c4; background: #fff; margin-right: 2px; }
.sample span { flex: 1; display: flex; justify-content: center; }
.sample svg { width: 40px; height: 8px; }
.sample b { display: flex; align-items: center; justify-content: center; width: 15px; height: 17px; border-left: 1px solid #c4c4c4; background: #e6e6e6; }
.pair { display: flex; flex-direction: column; margin-left: 2px; }
.pair label { display: flex; align-items: center; height: 13px; width: 53px; }
.pair.long label { width: 67px; }
.pair svg { width: 12px; height: 12px; margin-right: 1px; }
.pair input { flex: 1; width: 10px; height: 13px; padding: 0; border: 1px solid #c8c8c8; border-right: 0; background: #fff; line-height: 11px; }
.pair .off { color: #888; }
.pair .off input { background: #f7f7f7; }
.spin { display: flex; align-items: center; justify-content: space-evenly; width: 19px; height: 13px; border: 1px solid #d4d4d4; background: #ececec; }
.spin i { border-width: 3px 2px 0; }
.spin i.up { border-width: 0 2px 3px; }
.off .spin i { opacity: .3; }
.pct { display: flex; flex-direction: column; width: 12px; padding-left: 2px; line-height: 13px; }
.dim { color: #ccc; }
.lock { width: 11px; height: 11px; margin: 0 2px 0 1px; border: 1px solid #c4c4c4; background: #fff; }
.lock svg { width: 10px; height: 10px; }

.work { flex: 1; display: flex; min-height: 0; }
.tools { width: 25px; padding-top: 2px; border-right: 1px solid #dcdcdc; }
.tools button { width: 25px; height: 23px; }
.tools svg { width: 18px; height: 18px; }
.tools hr { width: 17px; height: 1px; margin: 2px auto; border: 0; background: #d8d8d8; }
.tools hr.lo { margin-bottom: 3px; }
.tools .on { width: 19px; height: 19px; margin: 2px 3px; border: 1px solid #c4c4c4; background: #fff; }
.tools .glyph { font-size: 13px; font-weight: 700; padding-left: 2px; }
.tools .glyph svg { width: 4px; height: 5px; align-self: end; margin: 0 0 3px -2px; }

.doc { flex: 1; display: flex; flex-direction: column; min-width: 0; }
.tabs { display: flex; height: 16px; background: #e9e9e9; border-bottom: 1px solid #3cb2ec; }
.tabs .home { width: 62px; gap: 3px; padding-right: 2px; background: #d9d9d9; }
.tabs .home svg { width: 12px; height: 11px; }
.tabs .cur { width: 66px; padding-right: 4px; margin-left: 1px; background: #cfe2fd; }
.tabs .add { width: 16px; background: #dcdcdc; }
.tabs .add svg { width: 10px; height: 10px; }
.ruler-row { display: flex; height: 14px; color: #999; }
.origin { width: 14px; height: 14px; }
.hr { flex: 1; width: 0; height: 14px; border-bottom: 1px solid #999; }
.hr text { font-size: 8px; fill: #999; }
.vr text { font-size: 9px; fill: #999; }
.unit { width: 18px; font-size: 8px; border-bottom: 1px solid #999; line-height: 12px; }
.canvas-row { flex: 1; display: flex; min-height: 0; }
.vr { width: 14px; height: auto; border-right: 1px solid #999; }
.sheet { flex: 1; background: #fff; }
.vscroll { display: flex; flex-direction: column; width: 13px; background: #fff; }
.vscroll button { height: 13px; background: #f0f0f0; }
.vscroll .before { flex: 29; }
.vscroll .thumb { flex: 29; background: linear-gradient(90deg, #f5f5f5, #c4c4c8); }
.vscroll .after { flex: 42; }
.vscroll .thumb svg { width: 6px; height: 8px; }
.thumb { display: flex; align-items: center; justify-content: center; border: 1px solid #999; border-radius: 1px; }
.page-row { display: flex; height: 13px; padding-left: 14px; }
.pages { flex: 1; display: flex; align-items: center; border-top: 1px solid #888; border-right: 1px solid #888; }
.pages > button { width: 12px; height: 12px; }
.pages > button svg { width: 9px; height: 9px; }
.count { width: 34px; text-align: center; line-height: 12px; }
.pages .page { display: grid; width: 37px; margin-left: 8px; }
.pages .page svg { grid-area: 1 / 1; width: 37px; height: 13px; }
.pages .page span { grid-area: 1 / 1; line-height: 12px; text-align: center; }
.grip { width: 4px; height: 10px; background: radial-gradient(circle, #ccc 1px, transparent 1px) 0 0 / 2px 3px; }
.pages .grip { margin-left: auto; }
.hscroll { flex: 1; display: flex; background: #fff; }
.hscroll button { width: 13px; background: #ececec; }
.hscroll .nav { background: #f7f7f7; }
.nav svg { width: 11px; height: 11px; }
.hscroll .before { flex: 33; }
.hscroll .thumb { flex: 32; background: linear-gradient(#f0f0f0, #bfbfc2); }
.hscroll .after { flex: 34; }
.hscroll .thumb svg { width: 8px; height: 6px; }
.docpal { display: flex; align-items: center; height: 15px; padding: 0 7px 0 2px; border-top: 1px solid #dcdcdc; }
.docpal i { margin: 0 4px; }
.docpal svg { width: 10px; height: 10px; }
.docpal button { width: 12px; }
.docpal .none { margin-left: 2px; }
.docpal .none svg { width: 13px; height: 13px; }
.docpal em { flex: 1; text-align: center; color: #b4b4b4; font-size: 9px; padding-left: 12px; }

.palette { display: flex; flex-direction: column; align-items: center; width: 15px; border-left: 1px solid #ccc; }
.dots { width: 12px; height: 5px; margin: 2px 0; background: radial-gradient(circle, #ccc 1px, transparent 1px) 0 0 / 3px 3px; }
.palette > i { margin: 0 0 3px; }
.sm { width: 9px; height: 9px; margin: 2px 0; }
.chips { flex: 1; display: flex; flex-direction: column; width: 14px; border: 1px solid #666; border-top: 0; margin: -1px 0 1px; }
.chips button { flex: 1; min-height: 0; border-top: 1px solid #666; background: #fff; }
.chips svg { width: 12px; height: 12px; }
.palette .sm:last-child { margin-bottom: 8px; }

.status { display: flex; align-items: center; height: 29px; padding-left: 6px; border-top: 1px solid #dcdcdc; font-size: 9px; }
.status > i { margin-left: 14px; }
.fills { display: flex; align-items: center; width: 181px; height: 20px; margin-left: auto; border-right: 1px solid #dcdcdc; }
.mon { width: 14px; height: 14px; margin-right: 13px; }
.pot { width: 14px; height: 14px; }
.box { width: 17px; height: 17px; margin-right: 3px; }
.nofill { font-size: 10px; }
.outline { display: flex; align-items: center; width: 176px; padding-left: 11px; white-space: nowrap; }
.pen { width: 8px; height: 14px; margin-right: 3px; }
.ink { width: 17px; height: 17px; margin-right: 3px; background: #231815; border: 1px solid #999; }

.note { position: absolute; left: 34px; top: 58px; width: 130px; height: 270px; pointer-events: none; }
.mark { position: absolute; right: 45px; bottom: 23px; width: 190px; height: 90px; pointer-events: none; }
.mark .big { font: 700 40px "Liberation Sans", sans-serif; }
.mark .du { font: 700 25px "Liberation Sans", sans-serif; }
.mark .jy { font: 700 30px "Noto Sans CJK SC", sans-serif; }
.mark .url { font: 22px "Liberation Sans", sans-serif; stroke-width: 1px; }
</style>
